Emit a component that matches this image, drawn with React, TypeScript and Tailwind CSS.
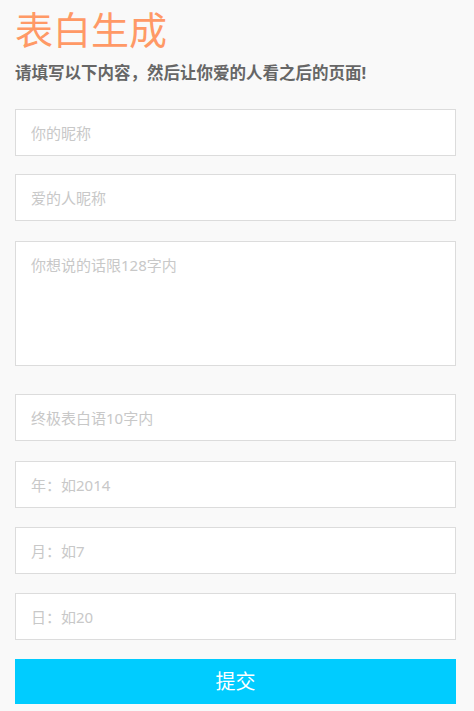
import React from "react";

const font = "font-['Noto_Sans','Noto_Sans_CJK_SC',sans-serif]";

const inputCls =
  "block w-[441px] h-[47px] border border-[#dcdcdc] bg-white px-[15px] text-[15px] text-[#333] outline-none placeholder:text-[#c8c8c8] " +
  font;

export default function App() {
  return (
    <div className={"min-h-[711px] w-[474px] bg-[#f9f9f9] pl-[15px] " + font}>
      <h1 className="pt-[9px] text-[38px] leading-[40px] font-normal text-[#ff9966]">表白生成</h1>
      <p className="mt-[14px] text-[16.5px] leading-[20px] font-bold text-[#666]">
        请填写以下内容，然后让你爱的人看之后的页面!
      </p>
      <form className="flex flex-col" onSubmit={(e) => e.preventDefault()}>
        <input className={inputCls + " mt-[26px]"} placeholder="你的昵称" />
        <input className={inputCls + " mt-[18px]"} placeholder="爱的人昵称" />
        <textarea
          className={
            "block w-[441px] h-[125px] mt-[20px] resize-none border border-[#dcdcdc] bg-white px-[15px] py-[12px] text-[15px] leading-[22px] text-[#333] outline-none placeholder:text-[#c8c8c8] " +
            font
          }
          placeholder="你想说的话限128字内"
        />
        <input className={inputCls + " mt-[28px]"} placeholder="终极表白语10字内" />
        <input className={inputCls + " mt-[20px]"} placeholder="年：如2014" />
        <input className={inputCls + " mt-[19px]"} placeholder="月：如7" />
        <input className={inputCls + " mt-[19px]"} placeholder="日：如20" />
        <button
          type="submit"
          className={"mt-[19px] w-[441px] h-[45px] bg-[#00ccff] text-white text-[20px] " + font}
        >
          提交
        </button>
      </form>
    </div>
  );
}
